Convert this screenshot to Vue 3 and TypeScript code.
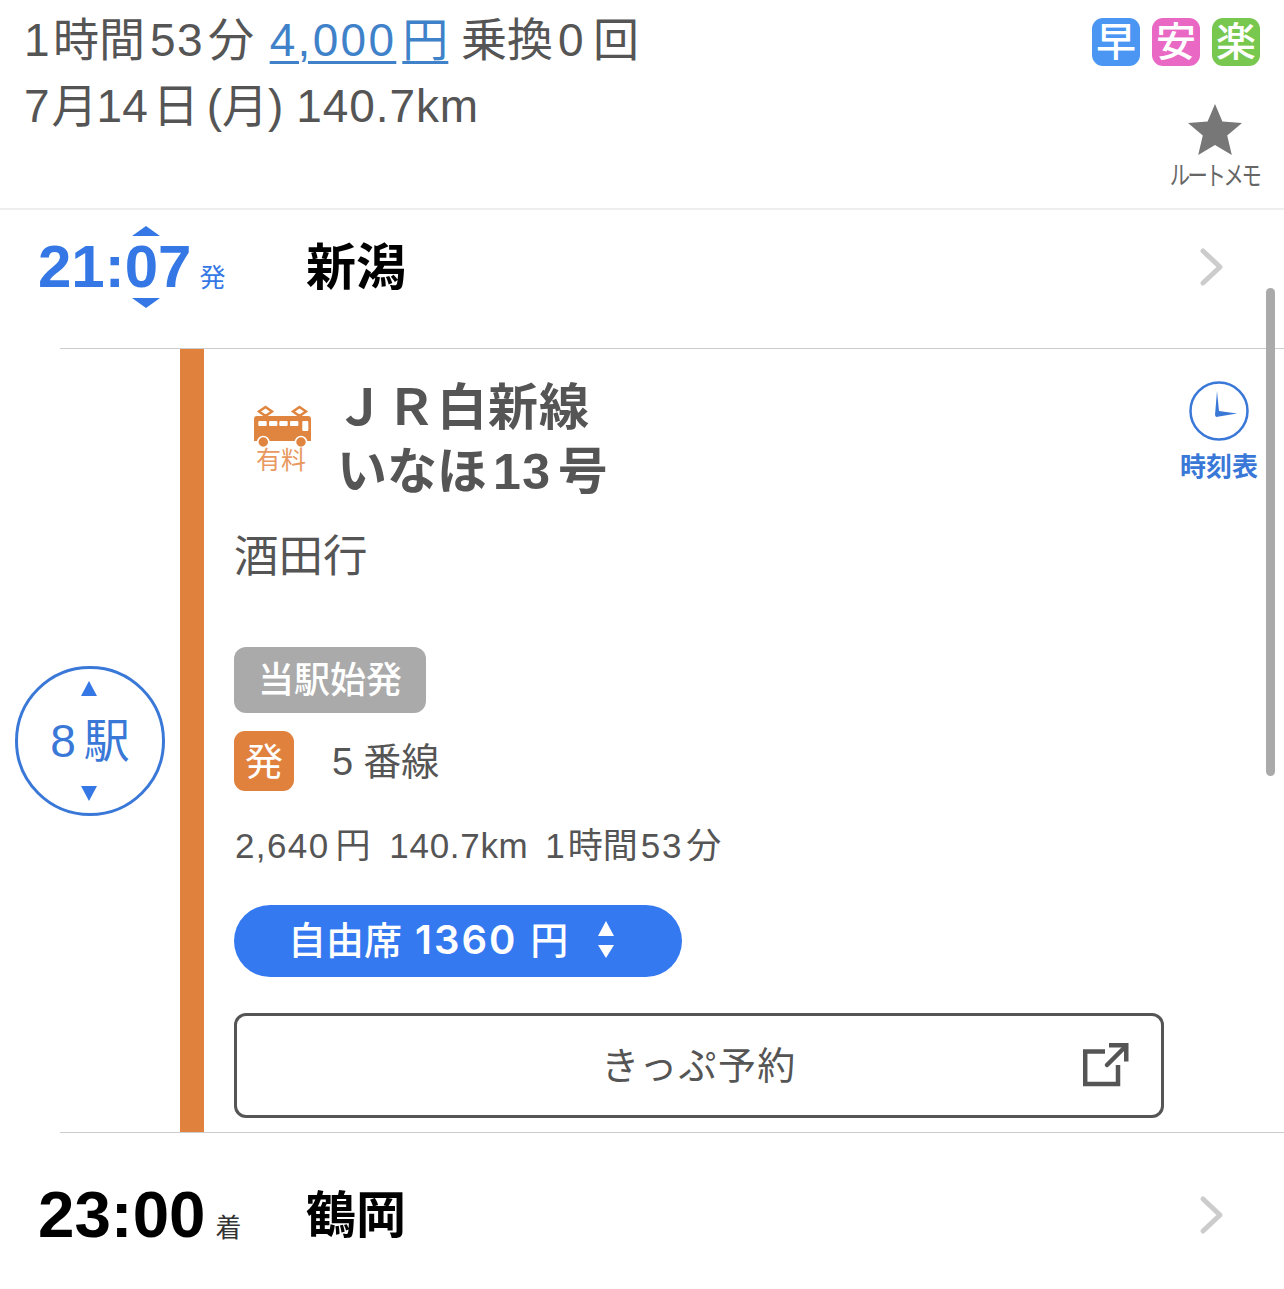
<script setup lang="ts">
const badges = [
  { label: "早", color: "#4a96f2" },
  { label: "安", color: "#e868c4" },
  { label: "楽", color: "#78c850" },
];
</script>

<template>
  <div class="page">
    <header class="summary">
      <div class="summary-text">
        <p class="line"><span class="n n-lead">1</span>時間<span class="n n-min">53</span>分 <a class="fare"><span class="n n-fare">4,000</span>円</a> 乗換<span class="n n-zero">0</span>回</p>
        <p class="line"><span class="n n-month">7</span>月<span class="n n-day">14</span>日<span class="paren">(月)</span> <span class="n n-dist">140.7km</span></p>
      </div>
      <div class="summary-side">
        <div class="badges">
          <span v-for="b in badges" :key="b.label" class="badge" :style="{ background: b.color }">{{ b.label }}</span>
        </div>
        <div class="memo">
          <svg width="56" height="54" viewBox="0 0 56 54"><path d="M28 1l7.4 17.6 19.6 1.400-14.800 12.600 4.600 19.400L28 42 11.200 52l4.600-19.400L1 20l19.600-1.400z" fill="#777" /></svg>
          <span class="memo-label">ルートメモ</span>
        </div>
      </div>
    </header>

    <section class="stop stop-from">
      <div class="time-col">
        <span class="time from">21:07<i class="tri up" /><i class="tri down" /></span>
        <span class="suffix from-suffix">発</span>
      </div>
      <span class="stop-name">新潟</span>
      <svg class="chevron" width="26" height="40" viewBox="0 0 26 40"><path d="M4 4l17 16L4 36" fill="none" stroke="#ccc" stroke-width="5" stroke-linecap="round" stroke-linejoin="round" /></svg>
    </section>
    <div class="rule" />

    <section class="leg">
      <div class="stations">
        <div class="circle">
          <i class="mini up" />
          <span class="circle-text"><span class="n n-eight">8</span>駅</span>
          <i class="mini down" />
        </div>
      </div>
      <div class="bar" />
      <div class="leg-body">
        <div class="leg-head">
          <div class="train">
            <svg width="58" height="43" viewBox="0 0 58 43">
              <path d="M11.500 2l6.500 4.500-6.500 4.500L5 6.500zM45.500 2L52 6.500 45.500 11 39 6.500z" fill="none" stroke="#e08540" stroke-width="2.500" />
              <path d="M0 14a3 3 0 0 1 3-3h51a3 3 0 0 1 3 3v22H0z" fill="#e08540" />
              <rect x="4.300" y="16" width="8.400" height="5" rx="1" fill="#fff" />
              <rect x="15" y="16" width="8.400" height="5" rx="1" fill="#fff" />
              <rect x="25.300" y="16" width="8.400" height="5" rx="1" fill="#fff" />
              <rect x="36" y="16" width="8.400" height="5" rx="1" fill="#fff" />
              <rect x="48.300" y="16" width="6" height="10" rx="1" fill="#fff" />
              <circle cx="9.300" cy="37" r="5.500" fill="#e08540" stroke="#fff" stroke-width="1.500" />
              <circle cx="47" cy="37" r="5.500" fill="#e08540" stroke="#fff" stroke-width="1.500" />
            </svg>
            <span class="train-label">有料</span>
          </div>
          <h2 class="line-name">
            <span class="jr">ＪＲ白新線</span>
            <span>いなほ<span class="n n-train">13</span>号</span>
          </h2>
          <div class="timetable">
            <svg width="60" height="60" viewBox="0 0 60 60">
              <circle cx="30" cy="30" r="28.500" fill="none" stroke="#3a78d8" stroke-width="2.500" />
              <path d="M28 10l2 20 18 2.500-21 3.500-1-2z" fill="#3a78d8" />
            </svg>
            <span class="timetable-label">時刻表</span>
          </div>
        </div>

        <p class="dest">酒田行</p>
        <span class="first-train">当駅始発</span>
        <div class="platform">
          <span class="dep">発</span>
          <span class="platform-text"><span class="n n-track">5</span>番線</span>
        </div>
        <p class="detail"><span class="n n-price">2,640</span>円 <span class="n n-km">140.7km</span> <span class="n n-hour">1</span>時間<span class="n n-mins">53</span>分</p>

        <div class="seat">
          <span class="seat-label">自由席<span class="seat-num">1360</span>円</span>
          <span class="seat-arrows"><i class="mini up white" /><i class="mini down white" /></span>
        </div>

        <div class="reserve">
          <span>きっぷ予約</span>
          <svg class="ext" width="48" height="46" viewBox="0 0 48 46">
            <path d="M22 9.500H2.200V42H35V23" fill="none" stroke="#555" stroke-width="4.500" />
            <path d="M24 23L42 5" fill="none" stroke="#555" stroke-width="4.500" stroke-linecap="round" />
            <path d="M26 1h19.500v18.500H41V5.500H26z" fill="#555" />
          </svg>
        </div>
      </div>
    </section>
    <div class="rule" />

    <section class="stop stop-to">
      <div class="time-col">
        <span class="time to">23:00</span>
        <span class="suffix">着</span>
      </div>
      <span class="stop-name">鶴岡</span>
      <svg class="chevron" width="26" height="40" viewBox="0 0 26 40"><path d="M4 4l17 16L4 36" fill="none" stroke="#ccc" stroke-width="5" stroke-linecap="round" stroke-linejoin="round" /></svg>
    </section>

    <div class="scrollbar" />
  </div>
</template>

<style scoped>
.page {
  position: relative;
  width: 1284px;
  height: 1289px;
  overflow: hidden;
  background: #fff;
  color: #555;
  font-family: "Liberation Sans", "Noto Sans CJK JP", sans-serif;
}

p,
h2 {
  margin: 0;
}

.n {
  letter-spacing: 0.03em;
}

.n-lead {
  margin-right: 2px;
}

.n-min {
  margin: 0 4px 0 5px;
}

.n-fare {
  margin-right: 6px;
  letter-spacing: 0.05em;
}

.n-zero {
  margin: 0 8px 0 5px;
}

.n-month {
  margin-right: 2px;
  letter-spacing: 0;
}

.n-day {
  margin: 0 5px 0 -1px;
  letter-spacing: 0;
}

.paren {
  margin-left: 8px;
}

.n-dist {
  letter-spacing: 0.02em;
}

.n-eight {
  margin-right: 8px;
  letter-spacing: 0;
}

.n-train {
  margin: 0 6px;
  letter-spacing: 0.03em;
}

.n-track {
  margin-right: 10px;
  letter-spacing: 0;
}

.n-price {
  margin-right: 6px;
  letter-spacing: 0.04em;
}

.n-km {
  margin-left: 9px;
  letter-spacing: 0.02em;
}

.n-hour {
  margin: 0 3px 0 7px;
  letter-spacing: 0;
}

.n-mins {
  margin: 0 3px 0 3px;
  letter-spacing: 0.05em;
}

.summary {
  display: flex;
  justify-content: space-between;
  height: 210px;
  padding: 7px 24px 0;
  box-sizing: border-box;
  border-bottom: 2px solid #eee;
}

.line {
  font-size: 46px;
  line-height: 66px;
  white-space: nowrap;
}

.fare {
  margin-left: 3px;
  color: #3f82c9;
  text-decoration: underline;
  text-decoration-thickness: 3px;
  text-underline-offset: 5px;
}

.summary-side {
  display: flex;
  flex-direction: column;
  align-items: flex-end;
  padding-top: 11px;
}

.badges {
  display: flex;
  gap: 12px;
}

.badge {
  width: 48px;
  height: 48px;
  border-radius: 11px;
  color: #fff;
  font-size: 40px;
  font-weight: 500;
  line-height: 48px;
  text-align: center;
}

.memo {
  display: flex;
  flex-direction: column;
  align-items: center;
  width: 90px;
  margin-top: 37px;
}

.memo svg {
  display: block;
}

.memo-label {
  margin: 3px -13px 0;
  font-size: 26px;
  line-height: 32px;
  letter-spacing: -3px;
  color: #666;
  transform: scaleX(0.78);
  white-space: nowrap;
}

.stop {
  display: flex;
  align-items: center;
  box-sizing: border-box;
  padding-left: 38px;
}

.stop-from {
  height: 138px;
  padding-bottom: 24px;
}

.stop-to {
  height: 156px;
  padding-top: 8px;
}

.time-col {
  display: flex;
  align-items: baseline;
  width: 268px;
}

.time {
  position: relative;
  font-weight: 700;
  line-height: 1;
}

.time.from {
  font-size: 60px;
  color: #3578e5;
}

.time.to {
  font-size: 65.500px;
  color: #000;
}

.tri {
  position: absolute;
  left: 94px;
  width: 0;
  height: 0;
  border-left: 14px solid transparent;
  border-right: 14px solid transparent;
}

.tri.up {
  top: -11px;
  border-bottom: 10px solid #3578e5;
}

.tri.down {
  bottom: -11px;
  border-top: 10px solid #3578e5;
}

.suffix {
  margin-left: 10px;
  font-size: 26px;
  color: #333;
}

.from-suffix {
  margin-left: 8px;
  color: #3578e5;
}

.stop-name {
  margin-top: -8px;
  font-size: 50px;
  font-weight: 700;
  color: #000;
}

.chevron {
  margin-left: auto;
  margin-right: 59px;
}

.rule {
  height: 1px;
  margin-left: 60px;
  background: #ccc;
}

.leg {
  display: flex;
  height: 783px;
}

.stations {
  display: flex;
  align-items: center;
  width: 180px;
  padding-left: 15px;
  box-sizing: border-box;
}

.circle {
  display: flex;
  flex-direction: column;
  align-items: center;
  justify-content: space-between;
  width: 150px;
  height: 150px;
  padding: 12px 0;
  box-sizing: border-box;
  border: 3px solid #3a78d8;
  border-radius: 50%;
}

.circle .mini {
  margin-left: -2px;
}

.circle-text {
  font-size: 46px;
  line-height: 1;
  color: #3a78d8;
}

.mini {
  display: block;
  width: 0;
  height: 0;
  border-left: 8px solid transparent;
  border-right: 8px solid transparent;
}

.mini.up {
  border-bottom: 15px solid #3578e5;
}

.mini.down {
  border-top: 15px solid #3578e5;
}

.mini.up.white {
  border-bottom-color: #fff;
}

.mini.down.white {
  border-top: 13px solid #fff;
}

.bar {
  width: 24px;
  background: #e0823e;
}

.leg-body {
  flex: 1;
  padding: 0 120px 0 30px;
  position: relative;
}

.leg-head {
  display: flex;
  padding-top: 27px;
}

.train {
  display: flex;
  flex-direction: column;
  align-items: center;
  width: 58px;
  margin: 29px 0 0 20px;
}

.train svg {
  display: block;
}

.train-label {
  margin: -2px 0 0 -4px;
  font-size: 25px;
  line-height: 28px;
  color: #e9995f;
}

.line-name {
  display: flex;
  flex-direction: column;
  margin-left: 25px;
  font-size: 50px;
  line-height: 64px;
  font-weight: 700;
  color: #555;
}

.jr {
  margin-left: -2px;
  letter-spacing: 1px;
}

.timetable {
  position: absolute;
  top: 32px;
  right: 26px;
  display: flex;
  flex-direction: column;
  align-items: center;
}

.timetable svg {
  display: block;
}

.timetable-label {
  margin-top: 8px;
  font-size: 26px;
  line-height: 36px;
  font-weight: 700;
  color: #3a78d8;
}

.dest {
  margin-top: 21px;
  font-size: 44.500px;
  line-height: 64px;
}

.first-train {
  display: block;
  width: 192px;
  height: 66px;
  margin-top: 58px;
  border-radius: 12px;
  background: #aaa;
  color: #fff;
  font-size: 36px;
  font-weight: 500;
  line-height: 68px;
  text-align: center;
}

.platform {
  display: flex;
  align-items: center;
  margin-top: 18px;
}

.dep {
  width: 60px;
  height: 60px;
  border-radius: 11px;
  background: #e0823e;
  color: #fff;
  font-size: 38px;
  line-height: 62px;
  text-align: center;
}

.platform-text {
  margin: -6px 0 0 38px;
  font-size: 38px;
}

.detail {
  margin: 28px 0 0 1px;
  font-size: 35px;
  line-height: 54px;
}

.seat {
  display: flex;
  align-items: center;
  justify-content: space-between;
  width: 448px;
  height: 72px;
  margin-top: 32px;
  padding: 0 68px 0 54px;
  box-sizing: border-box;
  border-radius: 36px;
  background: #3579f0;
  color: #fff;
  font-size: 38px;
  font-weight: 500;
}

.seat-label {
  margin-bottom: 8px;
}

.seat-num {
  margin: 0 13px;
  font-family: Inter, "Liberation Sans", sans-serif;
  font-size: 40px;
  font-weight: 600;
  letter-spacing: 2px;
}

.seat-arrows {
  display: flex;
  flex-direction: column;
  gap: 9px;
  margin-bottom: 3px;
}

.reserve {
  position: relative;
  display: flex;
  align-items: center;
  justify-content: center;
  width: 930px;
  height: 105px;
  margin-top: 36px;
  padding-bottom: 6px;
  box-sizing: border-box;
  border: 3px solid #555;
  border-radius: 12px;
  font-size: 38px;
  letter-spacing: 1.400px;
}

.ext {
  position: absolute;
  right: 30px;
  top: 26px;
}

.scrollbar {
  position: absolute;
  left: 1266px;
  top: 288px;
  width: 9px;
  height: 488px;
  border-radius: 5px;
  background: #aaa;
}
</style>
